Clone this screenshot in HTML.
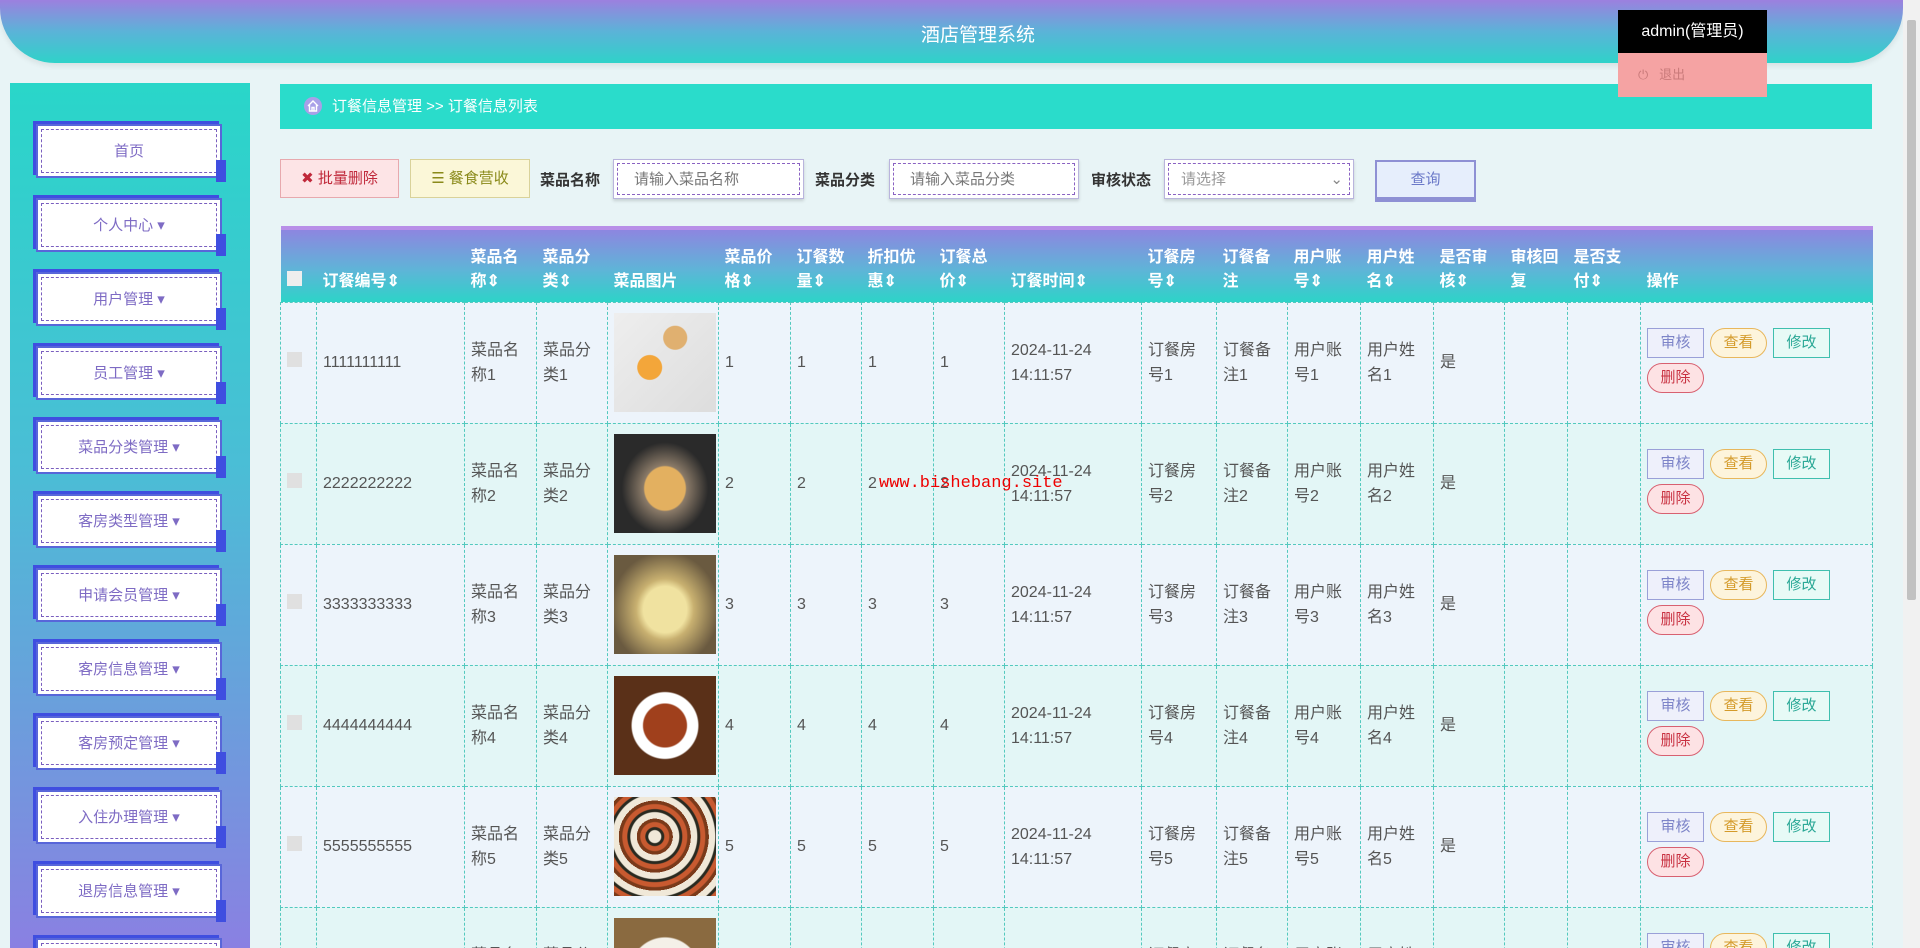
<!DOCTYPE html>
<html><head><meta charset="utf-8"><style>
*{box-sizing:border-box;margin:0;padding:0}
html,body{width:1920px;height:948px;overflow:hidden}
body{background:#e8f4f6;font-family:"Liberation Sans","Noto Sans CJK SC",sans-serif;position:relative}
#wrap{position:absolute;left:0;top:0;width:1920px;height:948px;overflow:hidden}
.hdr{position:absolute;left:0;top:0;width:1903px;height:63px;border-radius:0 0 55px 55px;background:linear-gradient(180deg,#9c80df 0%,#5bb3d8 50%,#2fd2c9 100%);box-shadow:0 3px 6px rgba(0,0,0,.08)}
.hdr .t{position:absolute;left:921px;top:20px;color:#fff;font-size:19px}
.scroll{position:absolute;right:0;top:0;width:17px;height:948px;background:#f1f1f1}
.scroll div{position:absolute;left:4px;top:20px;width:9px;height:580px;background:#c1c1c1;border-radius:2px}
.adm{position:absolute;left:1618px;top:10px;width:149px}
.adm .a{height:43px;background:#000;color:#fff;font-size:16px;line-height:43px;text-align:center}
.adm .b{height:44px;background:#f5a3a3;color:#c97a7a;font-size:13px;line-height:44px;padding-left:20px}
.side{position:absolute;left:10px;top:83px;width:240px;height:865px;background:linear-gradient(180deg,#29d6c9 0%,#4bbdd6 45%,#8a80e2 100%)}
.mi{position:absolute;left:26px;width:186px;height:54px;background:#fff;border:2px solid #5866d9;box-shadow:-3px -3px 0 #3f4ee0}
.mi span{position:absolute;inset:3px;border:1px dashed #7a5fbf;text-align:center;line-height:44px;color:#7e6bc4;font-size:15px}
.mi:after{content:"";position:absolute;right:-6px;bottom:-6px;width:10px;height:22px;background:#3f4ee0}
.crumb{position:absolute;left:280px;top:84px;width:1592px;height:45px;background:#2adccb;color:#fff;font-size:15px;line-height:45px;padding-left:52px}
.crumb svg{position:absolute;left:24px;top:13px}
.btn{position:absolute;top:159px;height:39px;font-size:15px;line-height:37px;text-align:center}
.lbl{position:absolute;top:169px;font-size:15px;color:#333;font-weight:bold}
.inp{position:absolute;top:159px;height:40px;background:#fff;border:1px solid #b9b4dd;box-shadow:0 2px 3px rgba(0,0,0,.15)}
.inp span{position:absolute;inset:3px;border:1px dashed #8a62c2;font-size:15px;color:#777;line-height:32px;padding-left:16px}
table{position:absolute;left:280px;top:226px;width:1592px;border-collapse:collapse;table-layout:fixed;border-top:4px solid #b88fe8}
th{height:74px;background:linear-gradient(180deg,#8d86e0 0%,#5fb4d8 55%,#2dd3c8 100%);color:#fff;font-size:16px;text-align:left;padding:0 6px 8px;line-height:24px;vertical-align:bottom}
td{height:121px;border:1px dashed #53c9be;font-size:16px;color:#555;padding:0 6px;line-height:25px}
tr:nth-child(odd) td{background:#e3f6f6}tr:nth-child(even) td{background:#edf4fb}
.ck{display:inline-block;width:15px;height:15px;background:#e0e0e0}
.img{width:102px;height:99px;display:block}
.ab{display:inline-block;width:57px;height:30px;border:1px solid;text-align:center;line-height:28px;font-size:15px;margin:0 6px 5px 0}
.wm{position:absolute;left:879px;top:474px;color:#e00;font-family:"Liberation Mono",monospace;font-size:17px}
</style></head><body><div id="wrap">
<div class="hdr"><div class="t">酒店管理系统</div></div>
<div class="scroll"><div></div></div>
<div class="side">
<div class="mi" style="top:41px"><span>首页</span></div>
<div class="mi" style="top:115px"><span>个人中心 ▾</span></div>
<div class="mi" style="top:189px"><span>用户管理 ▾</span></div>
<div class="mi" style="top:263px"><span>员工管理 ▾</span></div>
<div class="mi" style="top:337px"><span>菜品分类管理 ▾</span></div>
<div class="mi" style="top:411px"><span>客房类型管理 ▾</span></div>
<div class="mi" style="top:485px"><span>申请会员管理 ▾</span></div>
<div class="mi" style="top:559px"><span>客房信息管理 ▾</span></div>
<div class="mi" style="top:633px"><span>客房预定管理 ▾</span></div>
<div class="mi" style="top:707px"><span>入住办理管理 ▾</span></div>
<div class="mi" style="top:781px"><span>退房信息管理 ▾</span></div>
<div class="mi" style="top:855px"><span></span></div>
</div>
<div class="crumb"><svg width="18" height="18" viewBox="0 0 18 18"><circle cx="9" cy="9" r="9" fill="#a8a0e8"/><path d="M4 9 L9 4 L14 9 M5.5 8 V14 H12.5 V8 M8 14 V10.5 H10 V14" fill="none" stroke="#fff" stroke-width="1.4"/></svg>订餐信息管理 &gt;&gt; 订餐信息列表</div>
<div class="btn" style="left:280px;width:119px;background:#fde4e6;border:1px solid #e7a9ae;color:#c0283a">✖ 批量删除</div>
<div class="btn" style="left:410px;width:120px;background:#fbf7d8;border:1px solid #d9d29a;color:#8a8a1a">☰ 餐食营收</div>
<div class="lbl" style="left:540px">菜品名称</div>
<div class="inp" style="left:613px;width:191px"><span>请输入菜品名称</span></div>
<div class="lbl" style="left:815px">菜品分类</div>
<div class="inp" style="left:889px;width:190px"><span>请输入菜品分类</span></div>
<div class="lbl" style="left:1091px">审核状态</div>
<div class="inp" style="left:1164px;width:190px"><span style="color:#999;padding-left:12px">请选择<b style="position:absolute;right:6px;font-weight:normal;color:#888">⌄</b></span></div>
<div class="btn" style="left:1375px;top:160px;width:101px;height:42px;background:#e6eefc;border:2px solid #8e90d4;border-bottom-width:5px;color:#6a78c8;line-height:36px">查询</div>
<div class="adm"><div class="a">admin(管理员)</div><div class="b">⏻ &nbsp; 退出</div></div>
<table>
<colgroup><col style="width:36px"><col style="width:148px"><col style="width:72px"><col style="width:71px"><col style="width:111px"><col style="width:72px"><col style="width:71px"><col style="width:72px"><col style="width:71px"><col style="width:137px"><col style="width:75px"><col style="width:71px"><col style="width:73px"><col style="width:73px"><col style="width:71px"><col style="width:63px"><col style="width:73px"><col style="width:232px"></colgroup>
<tr><th><span class="ck" style="background:#eee"></span></th><th>订餐编号⇕</th><th>菜品名称⇕</th><th>菜品分类⇕</th><th>菜品图片</th><th>菜品价格⇕</th><th>订餐数量⇕</th><th>折扣优惠⇕</th><th>订餐总价⇕</th><th>订餐时间⇕</th><th>订餐房号⇕</th><th>订餐备注</th><th>用户账号⇕</th><th>用户姓名⇕</th><th>是否审核⇕</th><th>审核回复</th><th>是否支付⇕</th><th>操作</th></tr>
<tr><td><span class="ck"></span></td><td>1111111111</td><td>菜品名称1</td><td>菜品分类1</td><td><div class="img" style="background:radial-gradient(circle at 35% 55%,#f3a63a 0 14%,transparent 15%),radial-gradient(circle at 60% 25%,#e0b070 0 12%,transparent 13%),linear-gradient(135deg,#eee,#ddd)"></div></td><td>1</td><td>1</td><td>1</td><td>1</td><td>2024-11-24 14:11:57</td><td>订餐房号1</td><td>订餐备注1</td><td>用户账号1</td><td>用户姓名1</td><td>是</td><td></td><td></td><td><span class="ab" style="border-color:#9aa0d8;color:#7d84c8;background:#eef0fb">审核</span><span class="ab" style="border-color:#e8b75c;color:#d49a2a;background:#fdf4dc;border-radius:15px">查看</span><span class="ab" style="border-color:#3fbfae;color:#2aa896;background:#e7faf6">修改</span><br><span class="ab" style="border-color:#d86070;color:#c83040;background:#fde2e4;border-radius:15px">删除</span></td></tr>
<tr><td><span class="ck"></span></td><td>2222222222</td><td>菜品名称2</td><td>菜品分类2</td><td><div class="img" style="background:radial-gradient(ellipse at 50% 55%,#e3b060 0 28%,#8a7a68 30%,#2a2a2a 60%)"></div></td><td>2</td><td>2</td><td>2</td><td>2</td><td>2024-11-24 14:11:57</td><td>订餐房号2</td><td>订餐备注2</td><td>用户账号2</td><td>用户姓名2</td><td>是</td><td></td><td></td><td><span class="ab" style="border-color:#9aa0d8;color:#7d84c8;background:#eef0fb">审核</span><span class="ab" style="border-color:#e8b75c;color:#d49a2a;background:#fdf4dc;border-radius:15px">查看</span><span class="ab" style="border-color:#3fbfae;color:#2aa896;background:#e7faf6">修改</span><br><span class="ab" style="border-color:#d86070;color:#c83040;background:#fde2e4;border-radius:15px">删除</span></td></tr>
<tr><td><span class="ck"></span></td><td>3333333333</td><td>菜品名称3</td><td>菜品分类3</td><td><div class="img" style="background:radial-gradient(ellipse at 50% 55%,#f0e2a0 0 30%,#c8b070 40%,#6a5a40 75%)"></div></td><td>3</td><td>3</td><td>3</td><td>3</td><td>2024-11-24 14:11:57</td><td>订餐房号3</td><td>订餐备注3</td><td>用户账号3</td><td>用户姓名3</td><td>是</td><td></td><td></td><td><span class="ab" style="border-color:#9aa0d8;color:#7d84c8;background:#eef0fb">审核</span><span class="ab" style="border-color:#e8b75c;color:#d49a2a;background:#fdf4dc;border-radius:15px">查看</span><span class="ab" style="border-color:#3fbfae;color:#2aa896;background:#e7faf6">修改</span><br><span class="ab" style="border-color:#d86070;color:#c83040;background:#fde2e4;border-radius:15px">删除</span></td></tr>
<tr><td><span class="ck"></span></td><td>4444444444</td><td>菜品名称4</td><td>菜品分类4</td><td><div class="img" style="background:radial-gradient(circle at 50% 50%,#a0401c 0 30%,#fff 32% 46%,#5a3018 48%)"></div></td><td>4</td><td>4</td><td>4</td><td>4</td><td>2024-11-24 14:11:57</td><td>订餐房号4</td><td>订餐备注4</td><td>用户账号4</td><td>用户姓名4</td><td>是</td><td></td><td></td><td><span class="ab" style="border-color:#9aa0d8;color:#7d84c8;background:#eef0fb">审核</span><span class="ab" style="border-color:#e8b75c;color:#d49a2a;background:#fdf4dc;border-radius:15px">查看</span><span class="ab" style="border-color:#3fbfae;color:#2aa896;background:#e7faf6">修改</span><br><span class="ab" style="border-color:#d86070;color:#c83040;background:#fde2e4;border-radius:15px">删除</span></td></tr>
<tr><td><span class="ck"></span></td><td>5555555555</td><td>菜品名称5</td><td>菜品分类5</td><td><div class="img" style="background:repeating-radial-gradient(circle at 40% 40%,#f0e8d8 0 6px,#2a2a20 7px 9px,#c85a30 10px 14px,#7a3a1a 15px 18px)"></div></td><td>5</td><td>5</td><td>5</td><td>5</td><td>2024-11-24 14:11:57</td><td>订餐房号5</td><td>订餐备注5</td><td>用户账号5</td><td>用户姓名5</td><td>是</td><td></td><td></td><td><span class="ab" style="border-color:#9aa0d8;color:#7d84c8;background:#eef0fb">审核</span><span class="ab" style="border-color:#e8b75c;color:#d49a2a;background:#fdf4dc;border-radius:15px">查看</span><span class="ab" style="border-color:#3fbfae;color:#2aa896;background:#e7faf6">修改</span><br><span class="ab" style="border-color:#d86070;color:#c83040;background:#fde2e4;border-radius:15px">删除</span></td></tr>
<tr><td><span class="ck"></span></td><td>6666666666</td><td>菜品名称6</td><td>菜品分类6</td><td><div class="img" style="background:radial-gradient(circle at 50% 55%,#a84a20 0 30%,#f4f0e8 32% 46%,#8a6a40 48%)"></div></td><td>6</td><td>6</td><td>6</td><td>6</td><td>2024-11-24 14:11:57</td><td>订餐房号6</td><td>订餐备注6</td><td>用户账号6</td><td>用户姓名6</td><td>是</td><td></td><td></td><td><span class="ab" style="border-color:#9aa0d8;color:#7d84c8;background:#eef0fb">审核</span><span class="ab" style="border-color:#e8b75c;color:#d49a2a;background:#fdf4dc;border-radius:15px">查看</span><span class="ab" style="border-color:#3fbfae;color:#2aa896;background:#e7faf6">修改</span><br><span class="ab" style="border-color:#d86070;color:#c83040;background:#fde2e4;border-radius:15px">删除</span></td></tr>
</table>
<div class="wm">www.bishebang.site</div>
</div></body></html>
